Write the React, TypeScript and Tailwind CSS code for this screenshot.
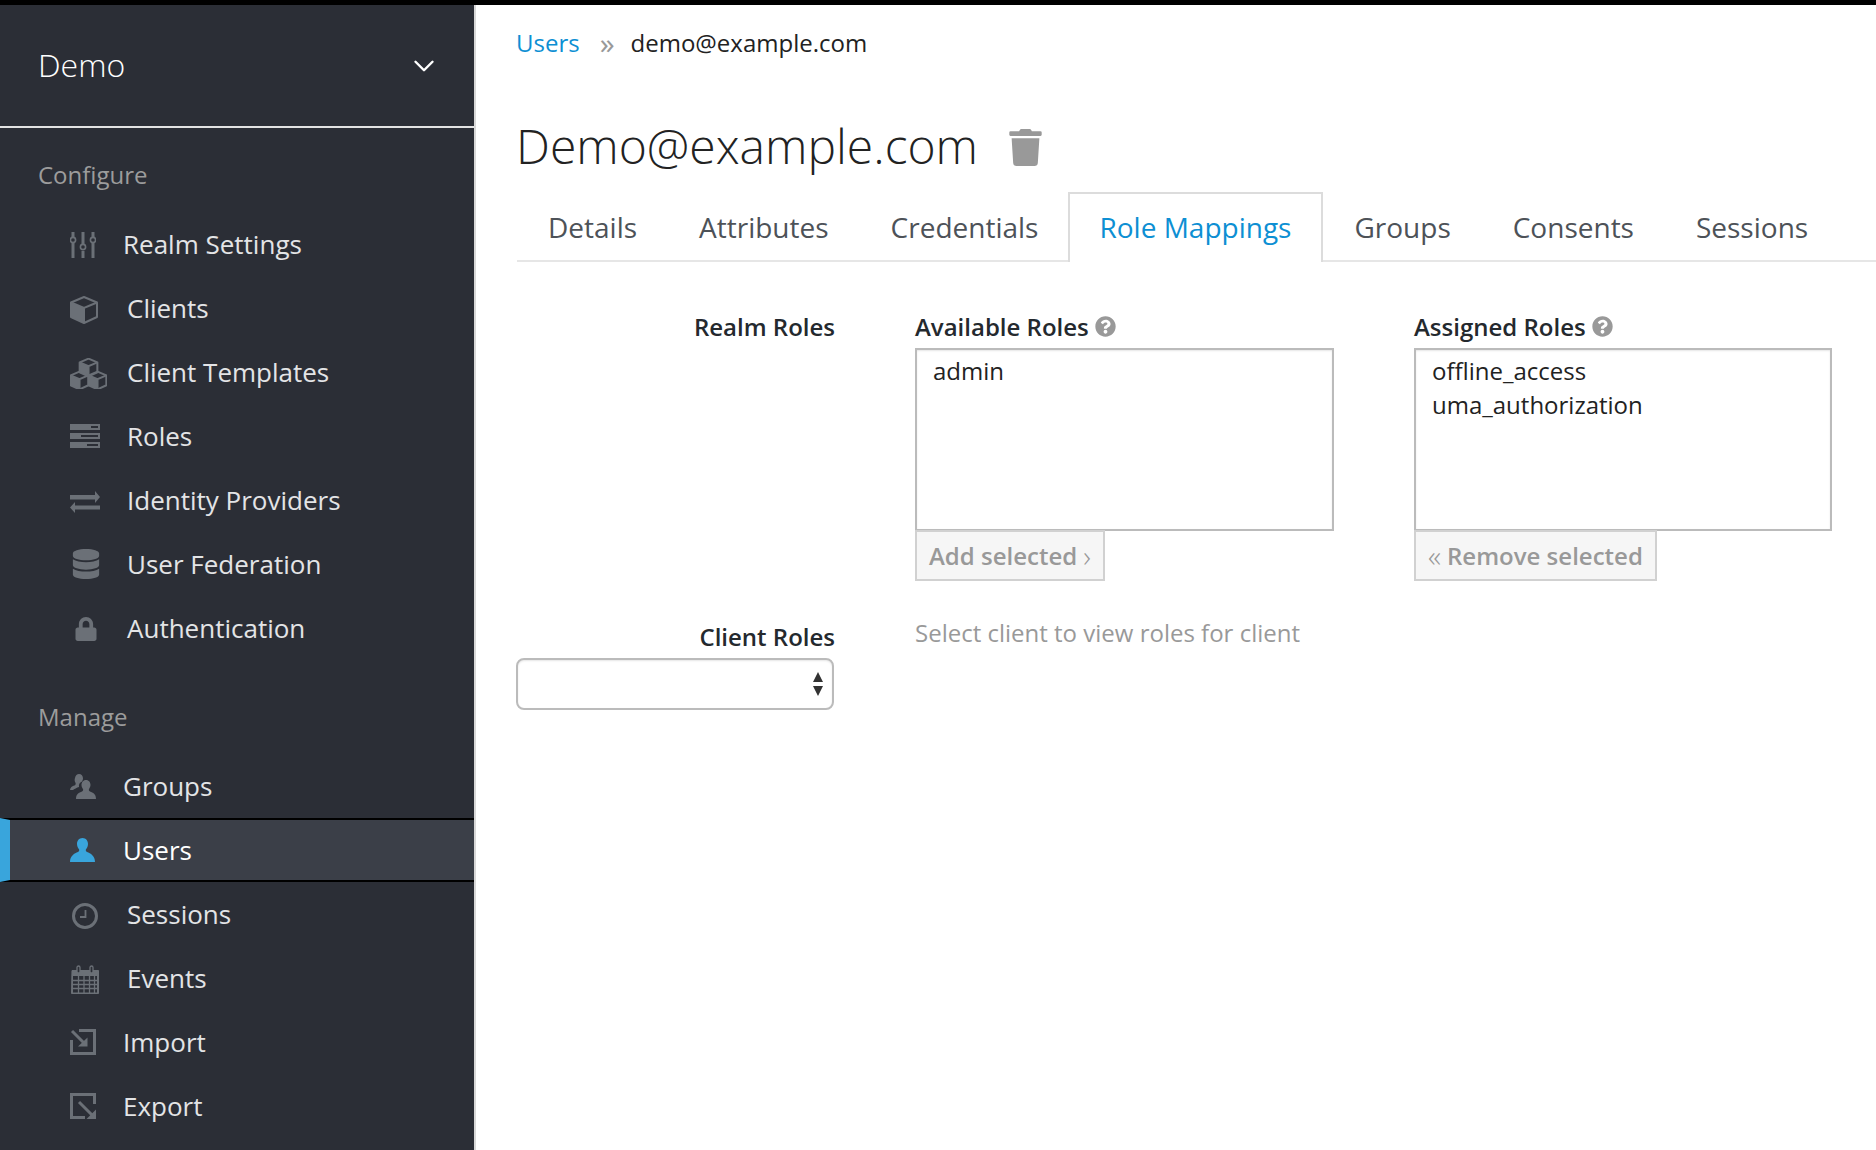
import React from "react";
import { FaDatabase, FaLock, FaTrash, FaQuestionCircle } from "react-icons/fa";
import { ChevronDown } from "lucide-react";

const Sliders = () => (
  <svg width="26" height="26" viewBox="0 0 26 26" fill="#6b7077">
    <rect x="1.500" y="0" width="3" height="5" /><rect x="1.500" y="11" width="3" height="15" />
    <circle cx="3" cy="8" r="2.600" fill="none" stroke="#6b7077" strokeWidth="1.600" />
    <rect x="11.500" y="0" width="3" height="12" /><rect x="11.500" y="19" width="3" height="7" />
    <circle cx="13" cy="15" r="2.600" fill="none" stroke="#6b7077" strokeWidth="1.600" />
    <rect x="21.500" y="0" width="3" height="5" /><rect x="21.500" y="11" width="3" height="15" />
    <circle cx="23" cy="8" r="2.600" fill="none" stroke="#6b7077" strokeWidth="1.600" />
  </svg>
);
const CubeShape = ({ sw = 2 }: { sw?: number }) => (
  <g>
    <path d="M14 1L27 6.500V21L14 27L1 21V6.500z" fill="none" stroke="#6b7077" strokeWidth={sw} strokeLinejoin="round" />
    <path d="M1 6.500L14 12L27 6.500M14 12V27" fill="none" stroke="#6b7077" strokeWidth={sw} />
    <path d="M1 6.500L14 12V27L1 21z" fill="#6b7077" />
  </g>
);
const Cube = () => (
  <svg width="28" height="28" viewBox="0 0 28 28"><CubeShape /></svg>
);
const Cubes = () => (
  <svg width="37" height="31" viewBox="0 0 37 31">
    <g transform="translate(9 0) scale(0.68)"><CubeShape sw={3} /></g>
    <g transform="translate(0 13) scale(0.68)"><CubeShape sw={3} /></g>
    <g transform="translate(18 13) scale(0.68)"><CubeShape sw={3} /></g>
  </svg>
);
const Server = () => (
  <svg width="30" height="24" viewBox="0 0 30 24" fill="#6b7077">
    <path fillRule="evenodd" d="M0 0h30v6H0zM21 2v2h7V2z" />
    <path fillRule="evenodd" d="M0 9h30v6H0zM11 11v2h17v-2z" />
    <path fillRule="evenodd" d="M0 18h30v6H0zM17 20v2h11v-2z" />
  </svg>
);
const Exchange = () => (
  <svg width="30" height="22" viewBox="0 0 30 22" fill="#6b7077">
    <path d="M0 4h25V0l5 6-5 6V8.500H0z" />
    <path d="M30 14.500H5V11L0 16.500 5 22v-3.500h25z" />
  </svg>
);
const Users2 = () => (
  <svg width="26" height="25" viewBox="0 0 26 25" fill="#6b7077">
    <path d="M9 0c2.500 0 4 2 4 4.500 0 1-.4 2-1 3-2.500 1-3.500 3-3 5.500-2 .7-5 2-6 3H0c0-2.500 2-3.800 5-4.800 1-.5.8-2 .2-2.900C4.500 7 4.500 5.500 5 4 5.500 1.500 7 0 9 0z" />
    <path d="M16 6c3 0 4.500 2.500 4.500 5 0 1.800-1 3-1.500 4-.4 1 0 2 1 2.500 3 1 6 2.500 6 7.500H6c0-5 3-6.500 6-7.500 1-.5 1.400-1.500 1-2.500-.7-1-1.500-2.200-1.500-4 0-2.500 1.500-5 4.500-5z" />
  </svg>
);
const User = () => (
  <svg width="25" height="24" viewBox="0 0 25 24" fill="#39a5dc">
    <path d="M12.500 0c3.500 0 5.500 2.800 5.500 6 0 2.300-1 4-2 5.300-.6 1 0 2.200 1 2.700 3.500 1.500 8 3.500 8 10H0c0-6.500 4.500-8.500 8-10 1-.5 1.600-1.700 1-2.700-1-1.300-2-3-2-5.300 0-3.200 2-6 5.500-6z" />
  </svg>
);
const Clock = () => (
  <svg width="26" height="26" viewBox="0 0 26 26" fill="none" stroke="#6b7077">
    <circle cx="13" cy="13" r="11.500" strokeWidth="3" />
    <path d="M13.500 7v7H8" strokeWidth="1.800" />
  </svg>
);
const Calendar = () => (
  <svg width="28" height="30" viewBox="0 0 28 30" fill="none" stroke="#6b7077">
    <path d="M1 5.500h26.500v23H.500z" fill="#6b7077" strokeWidth="1" />
    <path d="M2 11h24v16.500H2z" fill="#2b2e36" stroke="none" />
    <path d="M2 15.500h24M2 19.500h24M2 23.500h24M7.500 11v17M13 11v17M18.500 11v17M23.500 11v17" stroke="#6b7077" strokeWidth="1.300" />
    <rect x="6" y="1" width="3" height="7" rx="1.500" fill="#2b2e36" strokeWidth="1.300" />
    <rect x="19" y="1" width="3" height="7" rx="1.500" fill="#2b2e36" strokeWidth="1.300" />
  </svg>
);
const ImportIcon = () => (
  <svg width="26" height="26" viewBox="0 0 26 26" fill="none" stroke="#6b7077">
    <path d="M9 1.500h15.500v23h-23V11" strokeWidth="3" />
    <path d="M2 2l13 13" strokeWidth="3" />
    <path d="M17.500 8.500v9h-9.500z" fill="#6b7077" stroke="none" />
  </svg>
);
const ExportIcon = () => (
  <svg width="26" height="26" viewBox="0 0 26 26" fill="none" stroke="#6b7077">
    <path d="M24.500 11V1.500h-23v23H15" strokeWidth="3" />
    <path d="M9 9l13 13" strokeWidth="3" />
    <path d="M26 26H16.500l9.500-9.500z" fill="#6b7077" stroke="none" />
  </svg>
);

type Item = { label: string; icon: React.ReactNode; wide?: boolean; active?: boolean };

const configure: Item[] = [
  { label: "Realm Settings", icon: <span className="mt-[2px]"><Sliders /></span> },
  { label: "Clients", wide: true, icon: <span className="mt-[4px]"><Cube /></span> },
  { label: "Client Templates", wide: true, icon: <span className="mt-[3px]"><Cubes /></span> },
  { label: "Roles", wide: true, icon: <Server /> },
  { label: "Identity Providers", wide: true, icon: <span className="mt-[3px]"><Exchange /></span> },
  { label: "User Federation", wide: true, icon: <span className="ml-[1px]"><FaDatabase size={30} color="#6b7077" /></span> },
  { label: "Authentication", wide: true, icon: <span className="ml-[4px] mt-[2px]"><FaLock size={24} color="#6b7077" /></span> },
];
const manage: Item[] = [
  { label: "Groups", icon: <Users2 /> },
  { label: "Users", icon: <User />, active: true },
  { label: "Sessions", wide: true, icon: <span className="ml-[2px] mt-[4px]"><Clock /></span> },
  { label: "Events", wide: true, icon: <span className="ml-[1px] mt-[4px]"><Calendar /></span> },
  { label: "Import", icon: <ImportIcon /> },
  { label: "Export", icon: <ExportIcon /> },
];

function NavRow({ item }: { item: Item }) {
  return (
    <div
      className={
        item.active
          ? "flex h-[64px] items-center border-y-2 border-black bg-[#3b3f48] border-l-[10px] border-l-[#39a5dc] pl-[60px] text-[#ffffff]"
          : "flex h-[64px] items-center pl-[70px] text-[#e3e4e6]"
      }
    >
      <span className={item.wide ? "flex w-[57px] shrink-0 items-center" : "flex w-[53px] shrink-0 items-center"}>{item.icon}</span>
      <span className="text-[26px] leading-none">{item.label}</span>
    </div>
  );
}

function Tab({ label, active }: { label: string; active?: boolean }) {
  return (
    <div
      className={
        active
          ? "-mb-[2px] -ml-[1px] flex h-[70px] items-center border-2 border-b-0 border-[#dcdcdc] bg-white pl-[29px] pr-[30px] text-[#0d8fd3]"
          : "flex h-[68px] items-center px-[31px] pt-[2px] text-[#4d5258]"
      }
    >
      {active ? <span className="-mt-[2px]">{label}</span> : label}
    </div>
  );
}

function RoleList({ title, items, button, wide }: { title: string; items: string[]; button: React.ReactNode; wide?: boolean }) {
  return (
    <div className={wide ? "w-[419px]" : "w-[418px]"}>
      <div className="flex h-[35px] items-center gap-[6px] font-semibold text-[#24292e]">
        {title}
        <FaQuestionCircle size={21} color="#999999" />
      </div>
      <div className="mt-[4px] h-[183px] border-2 border-[#bbbbbb] px-[16px] py-[4px] leading-[34px] text-[#222222] shadow-[inset_0_1px_2px_rgba(0,0,0,0.1)]">
        {items.map((i) => (
          <div key={i}>{i}</div>
        ))}
      </div>
      <div className="-mt-[1px] inline-flex h-[51px] items-center gap-[6px] border-2 border-[#d1d1d1] bg-[#f6f6f6] px-[12px] font-semibold text-[#999999]">
        {button}
      </div>
    </div>
  );
}

export default function App() {
  return (
    <div className="flex h-[1150px] w-[1876px] flex-col overflow-hidden bg-white font-['Open_Sans',sans-serif]">
      <div className="h-[5px] shrink-0 bg-black" />
      <div className="flex min-h-0 flex-1">
        <aside className="w-[476px] shrink-0 border-r-2 border-[#d8d8d8] bg-[#2b2e36]">
          <div className="flex h-[123px] items-center justify-between border-b-2 border-[#e3e3e3] pl-[38px] pr-[33px] text-white">
            <span className="-mt-[2px] text-[32px] font-light">Demo</span>
            <ChevronDown size={34} strokeWidth={1.700} />
          </div>
          <div className="pl-[38px] pt-[27px] pb-[17px] text-[24px] leading-[40px] text-[#9c9c9c]">Configure</div>
          {configure.map((i) => (
            <NavRow key={i.label} item={i} />
          ))}
          <div className="pl-[38px] pt-[37px] pb-[17px] text-[24px] leading-[40px] text-[#9c9c9c]">Manage</div>
          {manage.map((i) => (
            <NavRow key={i.label} item={i} />
          ))}
        </aside>
        <main className="min-w-0 flex-1 pl-[40px] text-[24px]">
          <div className="flex h-[76px] items-center text-[#222222]">
            <span className="text-[#0d8fd3]">Users</span>
            <span className="ml-[20px] mr-[16px] text-[30px] leading-none text-[#999999]">»</span>
            <span>demo@example.com</span>
          </div>
          <div className="flex h-[111px] items-center gap-[29px] pt-[19px]">
            <h1 className="text-[48px] font-light text-[#222222]">Demo@example.com</h1>
            <span className="mt-[3px]"><FaTrash size={37} color="#999999" /></span>
          </div>
          <div className="ml-[1px] flex border-b-2 border-[#e6e6e6] text-[28px]">
            <Tab label="Details" />
            <Tab label="Attributes" />
            <Tab label="Credentials" />
            <Tab label="Role Mappings" active />
            <Tab label="Groups" />
            <Tab label="Consents" />
            <Tab label="Sessions" />
          </div>
          <div className="mt-[47px] flex">
            <div className="w-[319px] text-right font-semibold leading-[35px] text-[#24292e]">Realm Roles</div>
            <div className="ml-[80px]">
              <RoleList wide title="Available Roles" items={["admin"]} button={<>Add selected<span className="text-[30px] leading-none font-light">›</span></>} />
            </div>
            <div className="ml-[80px]">
              <RoleList title="Assigned Roles" items={["offline_access", "uma_authorization"]} button={<><span className="text-[30px] leading-none font-light">«</span>Remove selected</>} />
            </div>
          </div>
          <div className="mt-[38px] flex">
            <div className="w-[318px]">
              <div className="-mr-[1px] text-right font-semibold leading-[36px] text-[#24292e]">Client Roles</div>
              <div className="mt-[3px] flex h-[52px] items-center justify-end rounded-[8px] border-2 border-[#bbbbbb] pr-[8px] shadow-[inset_0_1px_2px_rgba(0,0,0,0.1)]">
                <svg width="12" height="24" viewBox="0 0 12 24" fill="#333333"><path d="M6 0l5 10H1zM6 24l5-10H1z" /></svg>
              </div>
            </div>
            <div className="ml-[81px] leading-[28px] text-[#999999]">Select client to view roles for client</div>
          </div>
        </main>
      </div>
    </div>
  );
}
